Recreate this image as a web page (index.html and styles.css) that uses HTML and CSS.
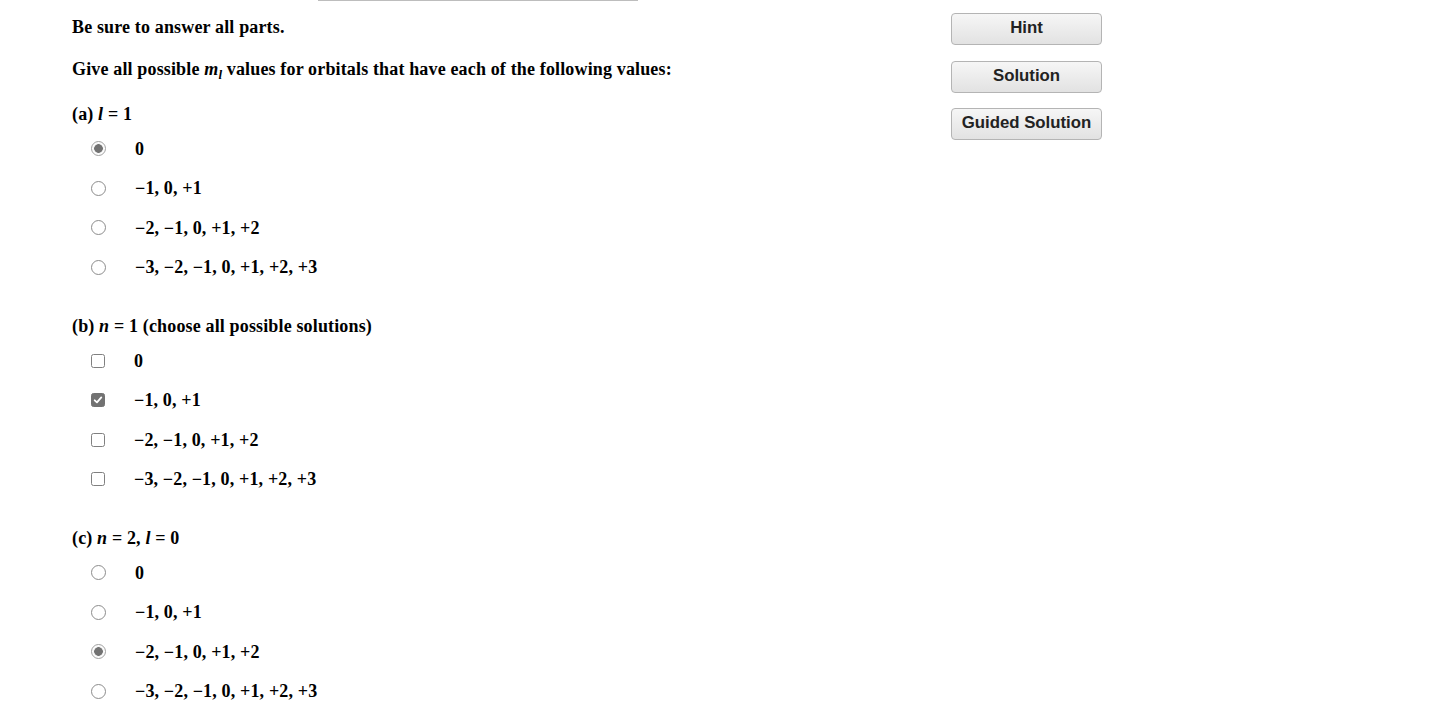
FILE: index.html
```html
<!DOCTYPE html>
<html>
<head>
<meta charset="utf-8">
<link rel="stylesheet" href="styles.css">
</head>
<body>
<div class="topline"></div>
<div class="page">
  <div class="main">
    <p class="line first">Be sure to answer all parts.</p>
    <p class="line second">Give all possible <i>m<sub>l</sub></i> values for orbitals that have each of the following values:</p>

    <p class="line part partA">(a) <i>l</i> = 1</p>
    <div class="options">
      <div class="opt"><span class="radio on"></span><span class="txt">0</span></div>
      <div class="opt"><span class="radio"></span><span class="txt">−1, 0, +1</span></div>
      <div class="opt"><span class="radio"></span><span class="txt">−2, −1, 0, +1, +2</span></div>
      <div class="opt"><span class="radio"></span><span class="txt">−3, −2, −1, 0, +1, +2, +3</span></div>
    </div>

    <p class="line part">(b) <i>n</i> = 1 (choose all possible solutions)</p>
    <div class="options">
      <div class="opt"><span class="check"></span><span class="txt">0</span></div>
      <div class="opt"><span class="check on"><svg viewBox="0 0 16 16" width="16" height="16"><path d="M3.6 8.4 L6.6 11.2 L12.4 4.6" fill="none" stroke="#fff" stroke-width="2.4" stroke-linecap="round" stroke-linejoin="round"/></svg></span><span class="txt">−1, 0, +1</span></div>
      <div class="opt"><span class="check"></span><span class="txt">−2, −1, 0, +1, +2</span></div>
      <div class="opt"><span class="check"></span><span class="txt">−3, −2, −1, 0, +1, +2, +3</span></div>
    </div>

    <p class="line part">(c) <i>n</i> = 2, <i>l</i> = 0</p>
    <div class="options">
      <div class="opt"><span class="radio"></span><span class="txt">0</span></div>
      <div class="opt"><span class="radio"></span><span class="txt">−1, 0, +1</span></div>
      <div class="opt"><span class="radio on"></span><span class="txt">−2, −1, 0, +1, +2</span></div>
      <div class="opt"><span class="radio"></span><span class="txt">−3, −2, −1, 0, +1, +2, +3</span></div>
    </div>
  </div>
  <div class="side">
    <button class="btn">Hint</button>
    <button class="btn">Solution</button>
    <button class="btn">Guided Solution</button>
  </div>
</div>
</body>
</html>
```

FILE: styles.css
```css
html, body {
  margin: 0;
  padding: 0;
  background: #fff;
}
body {
  font-family: "Liberation Serif", "Times New Roman", serif;
  font-weight: bold;
  font-size: 18px;
  letter-spacing: 0.15px;
  color: #000;
  overflow: hidden;
}
.topline {
  height: 1px;
  width: 320px;
  margin-left: 318px;
  background: #bdbdbd;
}
.page {
  display: flex;
  padding-left: 72px;
}
.main {
  width: 879px;
}
.line {
  margin: 0;
  line-height: 20px;
  height: 20px;
}
.first {
  margin-top: 16px;
}
.second {
  margin-top: 22px;
}
.second sub {
  font-size: 13px;
  vertical-align: -4px;
  line-height: 0;
}
.part {
  margin-top: 29px;
}
.partA {
  margin-top: 25px;
}
.options {
  margin-top: 5px;
  display: flex;
  flex-direction: column;
}
.opt {
  display: flex;
  align-items: center;
  height: 39.5px;
  padding-left: 19px;
}
.radio,
.check {
  box-sizing: border-box;
  width: 15px;
  height: 15px;
  flex: none;
  background: #fff;
  border: 1.3px solid #8c8c8c;
  display: flex;
  align-items: center;
  justify-content: center;
}
.radio {
  border-radius: 50%;
}
.radio.on {
  border-color: #a0a0a0;
  background: radial-gradient(circle, #727272 0 4px, #f2f2f2 4.6px, #fff 6px);
}
.check {
  width: 14px;
  height: 14px;
  border-radius: 2.5px;
  border-color: #808080;
}
.check.on {
  background: #727272;
  border-color: #727272;
}
.check svg {
  width: 12px;
  height: 12px;
}
.txt {
  margin-left: 29px;
  line-height: 20px;
}
.side {
  display: flex;
  flex-direction: column;
  padding-top: 12px;
  gap: 15.5px;
}
.btn {
  width: 151px;
  height: 32px;
  border: 1px solid #b4b4b4;
  border-radius: 4px;
  background: linear-gradient(#f6f6f6, #e2e2e2);
  font-family: "Liberation Sans", Arial, sans-serif;
  font-weight: bold;
  font-size: 16.8px;
  letter-spacing: 0;
  color: #222;
  padding: 0 0 2px 0;
}
```
